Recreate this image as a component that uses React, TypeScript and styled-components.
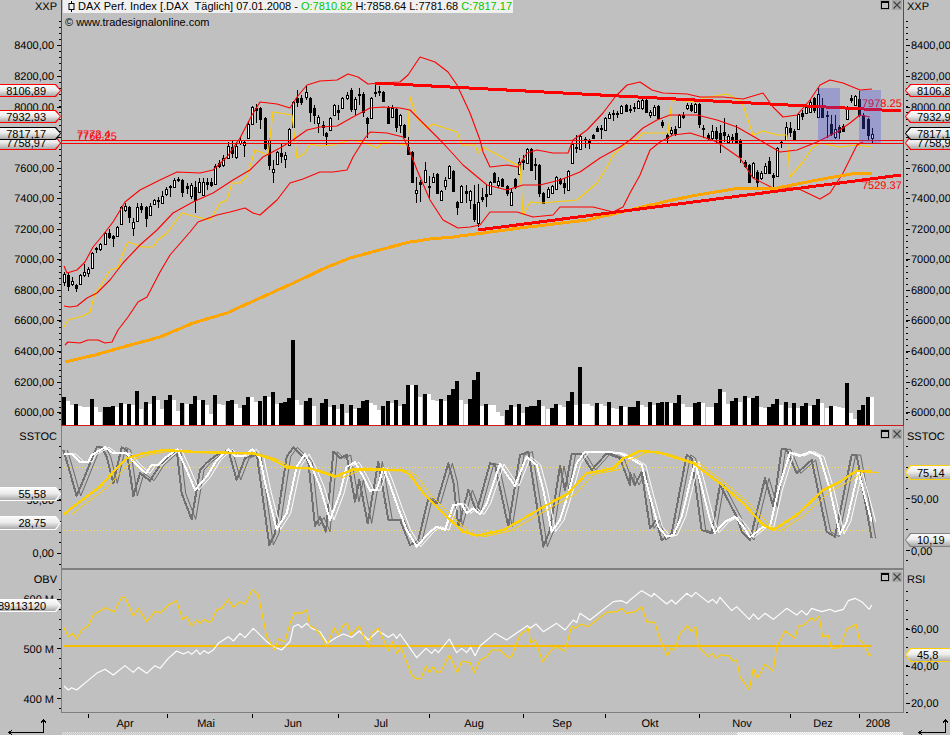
import React from "react";
import styled, { createGlobalStyle } from "styled-components";

type P = number[];
const toStr = (a: P, dx = 0, dy = 0) => {
  const out: string[] = [];
  for (let i = 0; i < a.length; i += 2) out.push(`${a[i] + dx},${a[i + 1] + dy}`);
  return out.join(" ");
};
// converts coordinates read at 3x from an origin into page coordinates
const z = (ox: number, oy: number, a: P): P => a.map((v, i) => (i % 2 === 0 ? ox + v / 3 : oy + v / 3));

const upper: P = [64,266,67,273,77,270,85,262,93,247,103,235,113,222,122,207,125,202,140,190,160,180,177,172,200,173,213,170,227,157,240,138,252,115,260,102,277,104,290,108,297,97,307,85,320,81,337,80,348,74,358,77,368,84,380,83,400,82,408,75,420,57,435,62,448,72,457,85,470,113,480,140,483,152,490,167,507,165,518,167,527,153,537,150,553,153,568,153,573,140,587,130,603,113,615,97,627,85,640,82,652,90,663,93,687,94,700,97,723,97,743,99,763,93,773,107,783,117,797,115,810,100,820,85,830,80,843,83,860,90,872,89];
const middle: P = [64,306,70,307,77,306,87,298,97,293,110,280,123,263,140,245,157,230,173,213,193,202,213,193,233,180,250,170,263,157,280,148,293,140,307,130,320,127,337,126,353,117,370,108,383,107,400,108,410,110,423,123,443,143,463,165,487,185,507,190,523,185,540,185,560,180,580,172,600,158,620,147,630,140,643,128,657,120,670,115,697,115,717,120,737,127,763,142,780,152,797,150,817,142,837,132,850,123,860,115,870,117];
const lower: P = [65,345,68,342,80,343,88,340,98,340,105,343,112,342,118,330,128,317,138,302,147,297,160,272,170,255,183,240,190,232,198,222,217,215,230,212,245,208,253,213,260,215,277,200,290,183,303,179,320,172,333,172,347,170,353,157,365,138,370,132,387,133,403,137,408,147,417,170,430,200,443,220,458,228,470,227,480,225,490,212,517,212,533,217,553,215,560,207,593,207,613,212,623,207,630,193,640,175,650,150,660,142,673,135,690,133,703,137,717,142,740,158,753,178,773,188,797,188,820,199,830,193,843,173,857,145,863,142];
const yellow: P = [64,327,68,320,83,316,90,312,95,293,100,287,110,270,118,268,123,253,128,242,143,247,153,247,158,240,167,233,182,213,197,217,210,220,220,203,227,200,232,183,240,183,247,176,255,150,268,155,273,112,292,115,297,158,305,153,310,144,320,146,333,145,350,140,363,142,377,148,383,142,407,145,410,97,417,118,427,128,433,124,457,132,462,145,475,145,478,153,483,147,517,165,520,165,523,215,530,202,542,203,553,202,577,200,597,183,607,167,613,155,630,140,636,140,643,133,663,133,668,133,672,100,697,102,703,98,727,94,742,102,753,135,763,131,777,135,787,135,790,177,803,162,812,148,820,143,840,147,857,145,872,147];
const ma200: P = [65,362,97,354.5,123,347,160,337,193,323,227,313,260,298,280,289,300,280,325,268,350,258,383,249,410,242,430,239,453,237,520,228,587,220,630,210,663,202,697,195,740,188,777,188,817,180,857,173,872,173];

// x, bodyTop, bodyBottom, high, low, black(1)/white(0)
const candles: number[][] = [
[64,274,282,272,286,0],[68,275,286,273,291,1],[72,281,284,277,286,0],[76,285,288,284,292,1],[80,275,284,274,285,0],[84,272,275,264,277,0],[88,269,273,267,277,0],[92,253,268,252,269,0],[96,248,249,247,253,1],[100,244,249,243,251,0],
[105,233,244,232,245,0],[109,233,237,229,239,1],[113,236,238,235,247,1],[117,227,236,226,237,0],[121,207,224,206,225,0],[125,206,210,203,212,0],[129,207,217,206,223,1],[133,222,228,218,236,0],[137,207,221,203,222,0],[141,206,209,203,213,1],
[146,207,218,206,227,1],[150,206,215,203,216,0],[154,200,204,199,205,0],[158,200,201,197,208,1],[162,196,203,191,204,0],[166,189,194,187,196,0],[170,186,187,185,197,1],[174,180,187,178,188,0],[178,179,180,177,182,1],[182,180,192,179,197,1],
[187,186,188,183,194,1],[191,185,196,183,199,0],[195,187,200,181,213,1],[199,182,192,178,193,0],[203,182,195,178,196,0],[207,182,184,178,190,1],[211,182,185,178,187,1],[215,166,184,164,185,0],[219,163,166,160,168,1],[223,158,165,155,167,0],
[228,146,158,142,159,0],[232,147,153,140,158,1],[236,146,157,142,159,0],[240,140,143,137,145,0],[244,142,145,140,157,0],[248,124,138,122,139,0],[252,107,124,106,125,0],[256,108,110,104,123,1],[260,108,119,107,129,1],[265,118,148,117,150,1],
[269,140,165,138,170,1],[273,169,172,160,183,0],[277,152,164,151,165,0],[281,153,156,143,163,1],[285,155,159,152,168,0],[289,129,145,128,146,0],[293,102,127,101,128,0],[297,98,102,90,107,1],[301,98,102,95,105,1],[306,92,97,86,100,0],
[310,98,112,97,122,1],[314,108,115,105,124,1],[318,117,123,115,133,0],[323,125,127,121,136,1],[326,133,136,132,145,1],[330,118,130,117,131,0],[334,105,115,104,116,0],[338,110,112,105,120,1],[342,98,108,97,109,0],[347,95,98,92,100,0],
[351,90,109,88,112,1],[355,99,109,97,115,0],[359,94,95,88,105,1],[363,94,112,92,117,1],[367,118,123,117,138,1],[371,98,118,97,119,0],[375,92,93,84,97,1],[379,91,92,86,96,1],[383,92,101,91,102,1],[388,108,123,106,124,1],
[392,108,117,105,118,0],[396,109,127,108,132,1],[400,115,125,114,133,0],[404,125,137,124,138,1],[408,147,154,137,155,1],[412,152,182,151,183,1],[416,190,193,177,203,0],[420,182,184,180,202,1],[425,170,182,162,183,0],[429,186,187,176,198,1],
[433,177,182,173,183,0],[437,174,193,173,194,1],[441,191,200,190,201,0],[445,180,186,177,190,0],[449,166,178,165,179,0],[453,171,191,170,192,1],[457,202,207,201,215,1],[461,186,202,185,203,0],[466,191,193,185,203,1],[470,191,200,190,209,0],
[474,204,219,185,222,1],[478,202,223,184,227,0],[482,197,199,188,202,1],[486,194,196,185,207,1],[490,182,194,181,195,0],[494,173,182,172,183,1],[498,181,185,177,188,0],[502,179,186,178,187,1],[507,186,193,185,196,1],[511,192,205,189,206,0],
[515,179,187,178,189,1],[519,162,174,158,175,0],[523,160,162,155,170,1],[527,149,163,148,164,0],[531,149,170,148,171,1],[535,164,165,158,180,1],[539,165,193,164,197,1],[543,193,203,192,204,1],[548,189,197,187,198,0],[552,186,193,185,194,0],
[556,177,189,176,190,0],[560,179,183,178,185,1],[564,183,187,178,194,1],[568,171,190,170,191,0],[572,144,163,143,164,0],[576,147,148,135,153,1],[580,136,149,135,150,0],[585,139,140,137,148,1],[589,141,142,139,149,1],[593,135,138,134,139,1],
[597,128,131,126,132,1],[601,128,129,125,139,0],[605,118,130,117,131,0],[609,114,118,112,119,0],[613,113,114,110,121,1],[617,113,114,111,118,1],[621,106,113,105,114,0],[626,105,111,104,112,1],[630,109,110,105,113,1],[634,107,108,103,112,1],
[638,101,108,100,109,0],[642,100,108,99,110,0],[646,100,112,97,113,1],[650,112,115,110,118,0],[654,107,115,105,116,0],[658,106,118,105,120,1],[662,122,125,120,128,1],[667,135,138,133,143,1],[671,130,133,127,135,0],[675,129,133,126,136,1],
[679,115,127,114,128,0],[683,115,117,112,119,1],[687,105,108,103,110,0],[691,105,110,103,112,1],[695,104,112,103,113,0],[699,104,124,103,128,1],[703,128,129,125,138,1],[708,135,138,133,140,1],[712,131,138,125,140,0],[716,131,138,127,143,1],
[720,133,143,125,153,1],[724,132,135,118,142,1],[728,136,142,134,143,0],[732,137,140,134,144,1],[736,133,143,125,144,1],[740,140,157,139,163,1],[745,162,166,160,168,1],[749,165,182,164,183,1],[753,163,177,162,178,0],[757,172,182,170,187,1],
[761,173,178,171,180,0],[765,166,173,163,174,0],[769,161,173,157,174,1],[773,175,177,173,188,1],[777,148,176,147,177,0],[781,142,143,140,148,1],[786,127,140,122,141,0],[790,128,132,122,137,1],[794,131,139,129,140,1],[798,114,129,113,130,0],
[802,113,116,110,120,1],[806,107,113,104,114,0],[810,102,112,100,113,0],[814,98,110,97,113,1],[818,94,117,88,118,0],[822,105,117,98,118,1],[827,115,116,111,138,1],[831,124,134,115,136,1],[835,129,137,115,139,0],[839,127,132,125,139,1],
[843,126,131,124,132,1],[847,107,119,106,120,0],[851,98,100,95,103,1],[855,96,105,95,106,0],[859,99,115,91,117,1],[863,115,128,113,129,1],[868,119,135,118,140,1],[872,134,138,128,143,0],
];

// [px in 3x zoom, top in 3x zoom, black]
const vol3: number[][] = [[186,200,1],[198,212,0],[210,225,0],[222,222,1],[234,228,0],[246,230,0],[258,232,0],[270,207,1],[282,230,0],[294,245,0],[310,231,1],[322,231,1],[334,228,1],[346,230,0],[358,219,1],[370,223,0],[382,222,1],[394,225,0],[406,183,1],[418,237,0],[432,216,1],[444,222,0],[456,198,1],[468,210,0],[480,237,0],[492,210,1],[504,195,1],[516,210,0],[528,243,0],[540,219,1],[556,223,0],[568,222,1],[580,198,1],[592,210,0],[604,210,1],[616,225,0],[628,252,0],[640,195,1],[652,222,0],[664,225,0],[678,213,1],[690,210,1],[702,222,0],[714,233,0],[726,225,1],[738,201,1],[750,200,0],[762,215,0],[774,213,1],[790,198,1],[802,200,0],[814,186,1],[826,222,0],[838,219,1],[850,216,1],[862,204,1],[874,30,1],[886,210,0],[898,225,0],[912,213,1],[924,204,1],[936,228,0]];
const vol8: number[][] = [[0,219,1],[12,207,1],[24,230,0],[36,225,1],[48,237,0],[60,222,1],[74,248,0],[87,225,1],[99,237,0],[111,234,1],[123,213,1],[135,210,1],[147,219,0],[159,225,0],[171,240,0],[183,228,1],[198,213,1],[210,218,0],[222,210,1],[234,228,0],[246,222,1],[258,165,1],[270,165,0],[282,165,1],[294,200,0],[309,192,1],[321,192,0],[333,210,0],[345,213,0],[357,207,1],[369,213,0],[381,195,1],[393,177,1],[405,153,1],[417,210,0],[431,222,0],[444,207,1],[456,150,1],[468,126,1],[480,228,0],[492,222,1],[504,225,0],[516,225,0],[528,246,0],[540,258,0],[555,240,1],[567,225,1],[579,231,0],[591,222,1],[603,249,0],[615,231,1],[627,228,1],[639,228,1],[651,210,1],[663,228,0],[677,237,0],[690,234,1],[702,222,1],[714,225,0],[726,231,0],[738,213,1],[750,186,1],[762,225,0],[774,111,1],[787,222,0],[799,222,0],[811,228,0],[825,219,1],[837,222,0],[849,228,0],[861,216,1],[873,234,0],[885,237,0],[897,228,1],[909,231,0]];
const vol4: number[][] = [[-6,231,1],[6,231,1],[18,213,1],[30,225,0],[42,232,0],[54,216,1],[66,225,0],[78,218,1],[90,216,1],[104,216,1],[117,219,0],[129,219,1],[141,195,1],[153,222,0],[165,231,0],[177,231,0],[189,219,1],[201,216,1],[213,219,0],[228,231,0],[240,231,0],[252,219,1],[264,177,1],[276,186,0],[288,222,0],[300,213,1],[312,204,1],[324,216,0],[338,198,1],[351,204,0],[363,204,1],[375,198,1],[387,231,0],[399,234,0],[411,231,1],[423,222,1],[435,207,1],[447,225,0],[461,216,1],[473,234,0],[485,219,1],[497,234,0],[509,228,1],[521,219,1],[533,228,0],[545,225,1],[557,207,1],[569,219,0],[584,234,0],[596,228,1],[608,228,0],[620,231,0],[632,234,0],[644,159,1],[656,249,0],[668,267,0],[680,240,1],[692,225,1],[708,201,1],[720,201,0]];
const bars = [
  ...vol3.map(([p, t, b]) => [p / 3, 330 + t / 3, b]),
  ...vol8.map(([p, t, b]) => [320 + p / 3, 330 + t / 3, b]),
  ...vol4.map(([p, t, b]) => [630 + p / 3, 330 + t / 3, b]),
];

const stGray: P = [
  ...z(0,330,[190,360,205,410,230,498,250,450,270,400,290,352,305,352,320,380,340,460,365,352,380,360,400,498,420,430,450,452,480,405,530,360,545,490,575,568,600,420,620,398,650,375,685,360,710,450,735,385,770,370,808,645,825,610,860,380,880,352,925,395,945,588]),
  ...z(320,330,[0,562,18,605,40,365,60,385,80,375,105,515,118,450,143,580,175,395,205,570,240,570,270,645,295,630,325,505,350,520,385,400,400,455,415,590,445,480,470,545,510,400,525,405,565,590,600,375,625,365,670,650,690,600,720,408,735,480,755,372,785,372,815,420,860,370,900,385,930,465]),
  ...z(630,330,[0,430,15,465,35,425,60,595,78,570,95,630,125,610,170,375,185,385,215,600,245,610,270,465,320,560,335,605,360,630,405,445,430,530,455,358,470,358,500,430,545,390,590,605,615,620,665,375,680,375,725,625]),
];
const stWhite: P = [
  ...z(0,330,[192,372,215,372,240,395,265,395,275,375,315,352,340,370,380,370,410,405,438,430,455,405,475,405,500,380,532,358,560,420,585,480,620,440,650,390,685,358,705,378,730,378,757,358,780,385,800,480,830,598,860,550,890,410,915,372,935,410]),
  ...z(320,330,[0,470,30,570,60,490,80,410,105,397,130,440,150,482,170,480,190,415,205,450,235,535,260,600,290,650,330,605,350,590,375,600,400,525,425,522,440,550,460,535,480,553,500,520,540,402,565,440,585,468,620,380,650,405,670,480,695,605,720,570,745,490,770,400,795,365,855,365,900,370]),
  ...z(630,330,[0,385,35,405,60,500,85,590,110,620,130,615,155,560,195,395,215,470,240,570,255,608,285,575,315,560,340,590,360,622,400,590,420,590,445,480,480,368,510,378,540,365,570,380,600,480,630,612,650,575,685,425,705,500,725,575]),
];
const stYellow: P = [
  ...z(0,330,[192,552,240,515,300,470,345,420,380,385,430,370,490,360,570,365,640,367,760,370,810,385,860,412,930,415]),
  ...z(320,330,[0,425,45,440,100,418,140,418,245,420,270,435,310,490,385,565,430,605,470,617,550,600,620,560,680,525,745,490,800,430,880,415,910,385]),
  ...z(630,330,[0,378,30,363,90,368,190,400,270,460,340,520,400,585,430,600,500,555,580,480,630,455,680,422,725,425]),
];
const obvWhite: P = [
  ...z(0,560,[192,378,205,390,215,383,230,390,260,365,290,340,315,328,340,345,375,317,400,337,415,322,440,340,465,317,480,325,505,295,530,273,550,282,565,275,575,283,590,270,600,283,612,272,625,280,640,270,655,250,685,230,700,243,720,220,735,233,760,205,800,245,825,262,845,270,870,245,880,200,895,193,905,203,920,190,935,205]),
  ...z(320,560,[0,215,22,250,50,232,70,222,95,232,118,213,145,240,175,212,205,232,220,222,230,235,240,222,290,293,318,265,335,280,345,268,355,278,388,237,410,278,425,265,440,278,452,262,465,287,480,258,525,220,560,240,600,212,622,197,630,205,648,192,670,215,710,190,735,210,760,180,770,188,780,160,810,180,880,125,905,122,920,130]),
  ...z(630,560,[0,120,35,92,65,110,72,100,110,132,125,120,137,132,170,100,185,110,197,97,235,127,248,118,260,130,270,112,305,152,320,140,358,178,370,162,385,178,405,160,430,178,470,145,500,165,515,152,530,165,545,145,575,155,600,148,615,155,640,148,655,122,675,115,695,125,718,148,725,135]),
];
const obvYellow: P = [
  ...z(0,560,[192,203,205,230,218,220,230,237,245,210,265,197,280,165,315,143,343,155,365,112,375,112,400,168,415,145,440,185,465,155,482,158,505,135,530,123,548,178,560,170,575,198,590,180,600,190,612,178,625,187,635,183,650,150,665,145,685,118,700,142,720,125,735,133,757,90,775,105,800,230,825,270,835,237,855,245,870,190,885,158,905,160,920,150,930,198,945,205]),
  ...z(320,560,[0,222,20,258,42,203,55,225,70,195,82,190,92,225,118,198,145,262,155,220,175,205,205,272,218,245,230,280,243,262,275,345,290,357,303,355,318,318,328,338,340,320,352,338,362,335,388,285,412,338,425,303,450,308,463,338,480,300,500,290,515,270,540,270,565,293,575,290,600,225,625,205,632,248,645,240,668,305,690,275,708,260,735,273,755,198,765,205,785,192,805,200,830,180,860,157,890,155,905,145,920,160]),
  ...z(630,560,[0,158,15,155,35,140,50,185,75,188,85,225,112,288,122,265,135,270,148,225,172,197,185,215,197,200,205,260,235,290,248,280,258,295,270,285,295,287,310,303,320,300,330,350,358,390,370,325,382,355,405,313,430,333,440,260,465,213,495,235,505,198,520,197,545,173,555,183,567,168,578,230,595,227,605,265,630,263,650,208,678,193,688,238,700,250,718,287,725,283]),
];

const range = (from: number, to: number, step: number) => {
  const r: number[] = [];
  for (let v = from; v <= to + 0.01; v += step) r.push(v);
  return r;
};

const Global = createGlobalStyle`
  html, body { margin: 0; padding: 0; width: 950px; height: 735px; overflow: hidden; background: #c0c0c0; }
  #root { width: 950px; height: 735px; }
`;
const Screen = styled.div`
  width: 950px;
  height: 735px;
  display: flex;
  flex-direction: column;
  overflow: hidden;
  background: #c0c0c0;
  color: #000;
  font: 11px "Liberation Sans", Arial, sans-serif;
`;
const Pane = styled.section<{ $h: number }>`
  display: flex;
  height: ${(p) => p.$h}px;
  flex: none;
`;
const AxisColumn = styled.div<{ $w: number }>`
  position: relative;
  flex: none;
  width: ${(p) => p.$w}px;
  overflow: hidden;
`;
const AxisDrawing = styled.svg`
  display: block;
  width: 100%;
  height: 100%;
  shape-rendering: crispEdges;
`;
const AxisText = styled.text`
  font: 11px "Liberation Sans", Arial, sans-serif;
  fill: #000;
  text-rendering: geometricPrecision;
`;
const Plot = styled.div<{ $color: string; $bottom: string; $bottomW: number }>`
  position: relative;
  flex: 1;
  min-width: 0;
  border-left: 1px solid ${(p) => p.$color};
  border-right: 1px solid ${(p) => p.$color};
  border-bottom: ${(p) => p.$bottomW}px solid ${(p) => p.$bottom};
`;
const ChartSvg = styled.svg`
  display: block;
  width: 100%;
  height: 100%;
  shape-rendering: crispEdges;
`;
const ChartNote = styled.text<{ $size?: number }>`
  font: ${(p) => p.$size ?? 11}px "Liberation Sans", Arial, sans-serif;
  fill: #ff0000;
  text-rendering: geometricPrecision;
`;
const TitleBar = styled.div`
  position: absolute;
  left: 1px;
  top: 0;
  width: 450px;
  height: 13px;
  background: #f0f0f0;
  display: flex;
  align-items: center;
  padding-left: 5px;
  box-sizing: border-box;
  white-space: pre;
  line-height: 13px;
`;
const CandleGlyph = styled.svg`
  width: 7px;
  height: 11px;
  margin-right: 3px;
  flex: none;
`;
const Green = styled.span`
  color: #00c800;
`;
const Copyright = styled.div`
  position: absolute;
  left: 3px;
  top: 16px;
  line-height: 13px;
  white-space: pre;
`;
const WindowButtons = styled.div`
  position: absolute;
  right: 1px;
  top: ${(p: { $top: number }) => p.$top}px;
  display: flex;
  gap: 2px;
`;
const WindowButton = styled.div`
  width: 10px;
  height: 10px;
  background: #a8a8a8;
  display: flex;
  align-items: center;
  justify-content: center;
`;
const ButtonIcon = styled.svg`
  width: 8px;
  height: 8px;
  display: block;
`;
const PillShell = styled.div<{ $top: number; $h: number; $border: string; $side: "l" | "r" }>`
  position: absolute;
  top: ${(p) => p.$top}px;
  height: ${(p) => p.$h}px;
  background: ${(p) => p.$border};
  ${(p) =>
    p.$side === "l"
      ? `left: 0; width: 61px; clip-path: polygon(0 0, 56px 0, 61px 50%, 56px 100%, 0 100%);`
      : `left: 1px; width: 60px; clip-path: polygon(0 50%, 5px 0, 100% 0, 100% 100%, 5px 100%);`}
`;
const PillFace = styled.div<{ $side: "l" | "r" }>`
  position: absolute;
  inset: 1px 0;
  display: flex;
  align-items: center;
  white-space: nowrap;
  overflow: hidden;
  line-height: 12px;
  background: linear-gradient(#fafafa, #ececec 45%, #a9a9a9);
  ${(p) =>
    p.$side === "l"
      ? `justify-content: flex-end; padding-right: 15px; clip-path: polygon(0 0, 55px 0, 60px 50%, 55px 100%, 0 100%);`
      : `justify-content: flex-start; padding-left: 12px; clip-path: polygon(1px 50%, 6px 0, 100% 0, 100% 100%, 6px 100%);`}
`;
const TimeRow = styled.div`
  display: flex;
  height: 22px;
  flex: none;
`;
const Corner = styled.svg<{ $w: number }>`
  flex: none;
  width: ${(p) => p.$w}px;
  height: 22px;
  display: block;
  shape-rendering: crispEdges;
`;
const TimeCenter = styled.div`
  flex: 1;
  min-width: 0;
  display: flex;
  flex-direction: column;
  padding: 0 1px;
`;
const TimeSvg = styled.svg`
  display: block;
  width: 100%;
  height: 19px;
  flex: none;
  shape-rendering: crispEdges;
`;
const MonthText = styled.text`
  font: 11px "Liberation Sans", Arial, sans-serif;
  fill: #000;
  text-anchor: middle;
  text-rendering: geometricPrecision;
`;
const Strip = styled.div`
  display: flex;
  height: 3px;
  flex: none;
`;
const StripPart = styled.div<{ $w: number; $a: string; $b: string }>`
  flex: ${(p) => (p.$w ? `0 0 ${p.$w}px` : "1")};
  background: repeating-conic-gradient(${(p) => p.$a} 0 25%, ${(p) => p.$b} 0 50%) 0 0 / 2px 2px;
`;

type Pill = { y: number; h: number; text: string; border: string };

const Axis: React.FC<{
  side: "l" | "r";
  y0: number;
  h: number;
  name: string;
  nameY: number;
  minor: number[];
  major: { y: number; label: string; textY?: number }[];
  pills: Pill[];
}> = ({ side, y0, h, name, nameY, minor, major, pills }) => {
  const left = side === "l";
  const w = left ? 61 : 46;
  const vx = left ? 0 : 904;
  return (
    <AxisColumn $w={w}>
      <AxisDrawing viewBox={`${vx} ${y0} ${w} ${h}`}>
        {minor.map((y) => (
          <line key={y} x1={left ? 59 : 906} x2={left ? 61 : 908} y1={Math.round(y) + 0.5} y2={Math.round(y) + 0.5} stroke="#000" />
        ))}
        {major.map((m) => (
          <g key={m.label}>
            <line x1={left ? 57 : 906} x2={left ? 61 : 910} y1={Math.round(m.y) + 0.5} y2={Math.round(m.y) + 0.5} stroke="#000" />
            <AxisText x={left ? 54 : 911} y={(m.textY ?? m.y) + 4} textAnchor={left ? "end" : "start"}>
              {m.label}
            </AxisText>
          </g>
        ))}
        <AxisText x={left ? 57 : 907} y={nameY + 4} textAnchor={left ? "end" : "start"}>
          {name}
        </AxisText>
      </AxisDrawing>
      {pills.map((p) => (
        <PillShell key={p.text} $top={p.y - y0} $h={p.h} $border={p.border} $side={side}>
          <PillFace $side={side}>{p.text}</PillFace>
        </PillShell>
      ))}
    </AxisColumn>
  );
};

const Buttons: React.FC<{ top: number }> = ({ top }) => (
  <WindowButtons $top={top}>
    <WindowButton>
      <ButtonIcon viewBox="0 0 8 8">
        <rect x="0.5" y="0.5" width="7" height="7" fill="#c0c0c0" stroke="#000" />
        <line x1="0" x2="8" y1="1" y2="1" stroke="#000" strokeWidth="2" />
      </ButtonIcon>
    </WindowButton>
    <WindowButton>
      <ButtonIcon viewBox="0 0 8 8">
        <path d="M0.5 0.5 L7.5 7.5 M7.5 0.5 L0.5 7.5" stroke="#404040" strokeWidth="1.1" fill="none" />
      </ButtonIcon>
    </WindowButton>
  </WindowButtons>
);

const Line: React.FC<{ pts: P; color: string; w?: number; dx?: number; dy?: number; smooth?: boolean }> = ({ pts, color, w = 1, dx = 0, dy = 0, smooth }) => (
  <polyline
    points={toStr(pts, dx, dy)}
    fill="none"
    stroke={color}
    strokeWidth={w}
    strokeLinejoin="round"
    shapeRendering={smooth ? "geometricPrecision" : undefined}
  />
);

const mainMajor = [
  ["8400,00", 45], ["8200,00", 76], ["8000,00", 107], ["7800,00", 137], ["7600,00", 168], ["7400,00", 198], ["7200,00", 229], ["7000,00", 259], ["6800,00", 290], ["6600,00", 320], ["6400,00", 351], ["6200,00", 382], ["6000,00", 412],
].map(([label, y]) => ({ label: label as string, y: y as number }));
const mainMinor = range(20.5, 424, 6.13);

const MONTHS: [string, number][] = [["Apr",125],["Mai",206],["Jun",293],["Jul",381],["Aug",474],["Sep",562],["Okt",650],["Nov",742],["Dez",823],["2008",878]];
const TICKS = [88,167,252,338,429,523,605,699,790,859];

export default function App() {
  return (
    <Screen>
      <Global />
      <Pane $h={426}>
        <Axis
          side="l" y0={0} h={426} name="XXP" nameY={6} minor={mainMinor} major={mainMajor}
          pills={[
            { y: 84, h: 13, text: "8106,89", border: "#ff0000" },
            { y: 110, h: 13, text: "7932,93", border: "#ff0000" },
            { y: 136, h: 14, text: "7758,97", border: "#ff0000" },
            { y: 127, h: 13, text: "7817,17", border: "#000000" },
          ]}
        />
        <Plot $color="#e01010" $bottom="#d01818" $bottomW={1}>
          <ChartSvg viewBox="62 0 841 425">
            {candles.map(([x, t, b, hi, lo, k]) => (
              <g key={x}>
                <line x1={x + 0.5} x2={x + 0.5} y1={hi} y2={lo} stroke="#000" />
                <rect x={x - 0.5} y={t + 0.5} width={2} height={Math.max(b - t, 1)} fill={k ? "#000" : "#fff"} stroke="#000" />
              </g>
            ))}
            {bars.map(([x, t, k], i) => (
              <rect key={i} x={Math.round(x)} y={Math.round(t)} width={4} height={425 - Math.round(t)} fill={k ? "#000" : "#fff"} />
            ))}
            <Line pts={yellow} color="#ffcc00" w={1.15} smooth />
            <Line pts={upper} color="#ff0000" w={1.1} smooth />
            <Line pts={middle} color="#ff0000" w={1.1} smooth />
            <Line pts={lower} color="#ff0000" w={1.1} smooth />
            <Line pts={ma200} color="#ffa500" w={3} />
            <ChartNote x={77} y={138}>7772.4</ChartNote>
            <ChartNote x={77} y={140}>7760.25</ChartNote>
            <ChartNote x={862} y={107}>7978.25</ChartNote>
            <ChartNote x={862} y={189}>7529.37</ChartNote>
            <line x1={62} x2={903} y1={140.5} y2={140.5} stroke="#ff0000" />
            <line x1={62} x2={903} y1={143.5} y2={143.5} stroke="#ff0000" />
            <line x1={375} y1={83} x2={901} y2={111} stroke="#ff0000" strokeWidth={3} />
            <line x1={478} y1={230} x2={901} y2={175} stroke="#ff0000" strokeWidth={3} />
            <rect x={818} y={88} width={22} height={52} fill="rgb(65,73,233)" fillOpacity={0.3} />
            <rect x={859} y={90} width={22} height={53} fill="rgb(65,73,233)" fillOpacity={0.3} />
          </ChartSvg>
          <TitleBar>
            <CandleGlyph viewBox="0 0 7 11">
              <path d="M3.5 0V11" stroke="#000" />
              <rect x="1" y="2.5" width="5" height="6" fill="#f0f0f0" stroke="#000" />
            </CandleGlyph>
            {"DAX Perf. Index [.DAX  Täglich] 07.01.2008 - "}
            <Green>O:7810.82</Green>
            {" H:7858.64 L:7781.68 "}
            <Green>C:7817.17</Green>
          </TitleBar>
          <Copyright>© www.tradesignalonline.com</Copyright>
          <Buttons top={0} />
        </Plot>
        <Axis
          side="r" y0={0} h={426} name="XXP" nameY={6} minor={mainMinor} major={mainMajor}
          pills={[
            { y: 84, h: 13, text: "8106,89", border: "#ff0000" },
            { y: 110, h: 13, text: "7932,93", border: "#ff0000" },
            { y: 136, h: 14, text: "7758,97", border: "#ff0000" },
            { y: 127, h: 13, text: "7817,17", border: "#000000" },
          ]}
        />
      </Pane>

      <Pane $h={144}>
        <Axis
          side="l" y0={426} h={144} name="SSTOC" nameY={436} minor={range(446, 564, 10.7)}
          major={[{ label: "50,00", y: 500 }, { label: "0,00", y: 553 }]}
          pills={[
            { y: 487, h: 14, text: "55,58", border: "#ffffff" },
            { y: 516, h: 14, text: "28,75", border: "#ffffff" },
          ]}
        />
        <Plot $color="#808080" $bottom="#808080" $bottomW={2}>
          <ChartSvg viewBox="62 426 841 142">
            <line x1={64} x2={870} y1={467.5} y2={467.5} stroke="#ffe040" strokeDasharray="1 2" />
            <line x1={64} x2={870} y1={530.5} y2={530.5} stroke="#ffe040" strokeDasharray="1 2" />
            <Line pts={stGray} color="#686868" w={1} dx={4} smooth />
            <Line pts={stGray} color="#707070" w={2} />
            <Line pts={stWhite} color="#ffffff" w={1} dx={4} smooth />
            <Line pts={stWhite} color="#ffffff" w={2} />
            <Line pts={stYellow} color="#ffd000" w={1} dx={7} dy={1} smooth />
            <Line pts={stYellow} color="#ffd000" w={2.4} />
          </ChartSvg>
          <Buttons top={3} />
        </Plot>
        <Axis
          side="r" y0={426} h={144} name="SSTOC" nameY={436} minor={range(446, 562, 10.4)}
          major={[{ label: "50,00", y: 498, textY: 499 }, { label: "0,00", y: 550, textY: 551 }]}
          pills={[
            { y: 465, h: 15, text: "75,14", border: "#ffd000" },
            { y: 533, h: 14, text: "10,19", border: "#808080" },
          ]}
        />
      </Pane>

      <Pane $h={143}>
        <Axis
          side="l" y0={570} h={143} name="OBV" nameY={579} minor={range(589, 709, 9.9)}
          major={[{ label: "600 M", y: 599 }, { label: "500 M", y: 648, textY: 649 }, { label: "400 M", y: 698, textY: 699 }]}
          pills={[{ y: 599, h: 13, text: "89113120", border: "#ffffff" }]}
        />
        <Plot $color="#808080" $bottom="#808080" $bottomW={1}>
          <ChartSvg viewBox="62 570 841 142">
            <line x1={64} x2={872} y1={646} y2={646} stroke="#f5bc00" strokeWidth={1.5} />
            <Line pts={obvWhite} color="#ffffff" w={1.15} smooth />
            <Line pts={obvYellow} color="#ffcc00" w={1.15} smooth />
          </ChartSvg>
          <Buttons top={2} />
        </Plot>
        <Axis
          side="r" y0={570} h={143} name="RSI" nameY={579} minor={range(591, 712, 9.3)}
          major={[{ label: "60,00", y: 629 }, { label: "40,00", y: 666 }, { label: "20,00", y: 703 }]}
          pills={[{ y: 648, h: 14, text: "45,8", border: "#ffd000" }]}
        />
      </Pane>

      <TimeRow>
        <Corner $w={61} viewBox="0 713 61 22">
          <path d="M8 732.5H43.5V720" stroke="#000" fill="none" />
          <path d="M43.5 719L41 723M43.5 719L46 723M8 732.5L12 730.5M8 732.5L12 734.5" stroke="#000" fill="none" />
        </Corner>
        <TimeCenter>
          <TimeSvg viewBox="62 713 841 19">
            {TICKS.map((x) => (
              <line key={x} x1={x + 0.5} x2={x + 0.5} y1={714} y2={718} stroke="#000" />
            ))}
            {MONTHS.map(([m, x]) => (
              <MonthText key={m} x={x} y={727}>{m}</MonthText>
            ))}
          </TimeSvg>
          <Strip>
            <StripPart $w={675} $a="#e6e6e6" $b="#bdbdbd" />
            <StripPart $w={0} $a="#ffffff" $b="#d8d8d8" />
          </Strip>
        </TimeCenter>
        <Corner $w={46} viewBox="904 713 46 22">
          <path d="M918 732.5H945.5V720" stroke="#000" fill="none" />
          <path d="M945.5 719L943 723M945.5 719L948 723M918 732.5L922 730.5M918 732.5L922 734.5" stroke="#000" fill="none" />
        </Corner>
      </TimeRow>
    </Screen>
  );
}
